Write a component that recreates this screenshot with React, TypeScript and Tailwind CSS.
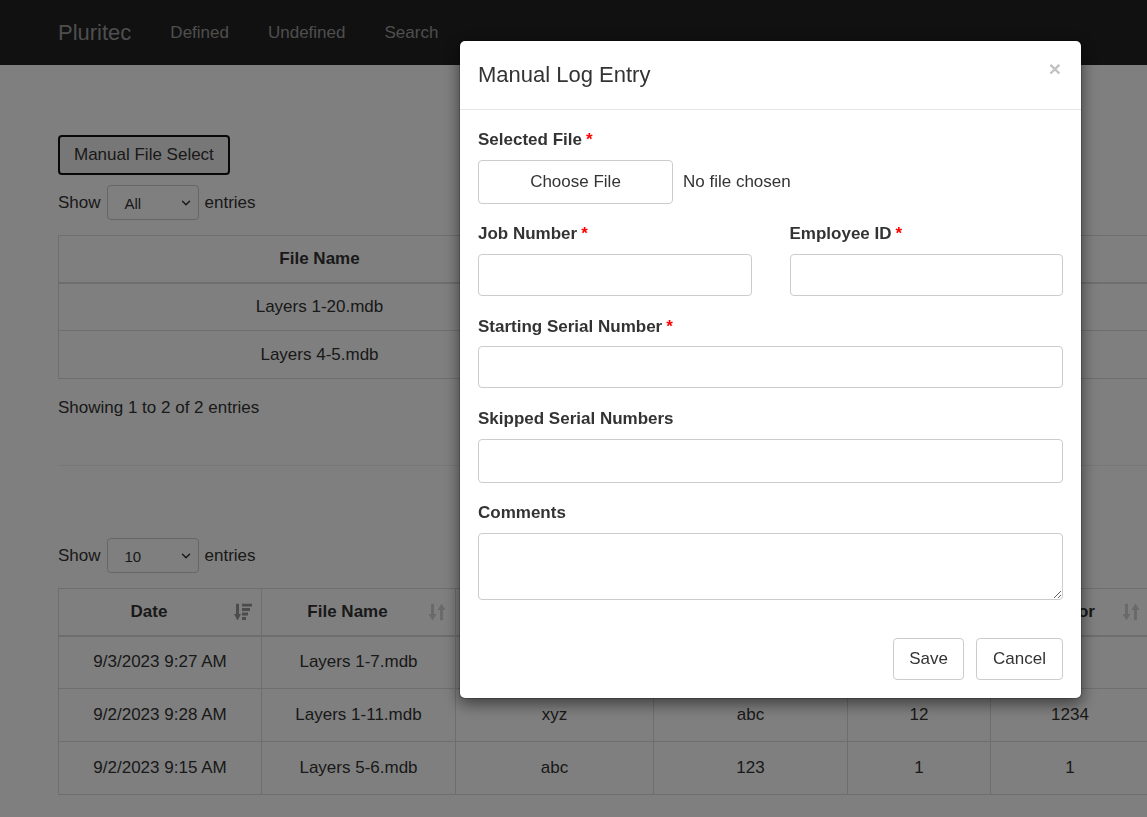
import { ChevronDown } from 'lucide-react';

// row 1 sits mostly behind the modal, so its middle cells stay blank
const bottomRows = [
  { date: '9/3/2023 9:27 AM', file: 'Layers 1-7.mdb', job: '', emp: '', count: '', op: '' },
  { date: '9/2/2023 9:28 AM', file: 'Layers 1-11.mdb', job: 'xyz', emp: 'abc', count: '12', op: '1234' },
  { date: '9/2/2023 9:15 AM', file: 'Layers 5-6.mdb', job: 'abc', emp: '123', count: '1', op: '1' },
];

function SortIcon({ active }: { active?: boolean }) {
  if (active) {
    return (
      <svg width="18" height="17" viewBox="0 0 18 17" className="fill-[#333] opacity-50">
        <rect x="2" y="0" width="3" height="11" />
        <polygon points="0,10.5 7,10.5 3.5,17" />
        <rect x="8" y="0" width="10" height="3" />
        <rect x="8" y="4.5" width="8" height="3" />
        <rect x="8" y="9" width="6" height="3" />
        <rect x="8" y="13.5" width="4" height="3" />
      </svg>
    );
  }
  return (
    <svg width="18" height="17" viewBox="0 0 18 17" className="fill-[#333] opacity-20">
      <rect x="3" y="0" width="3" height="11" />
      <polygon points="0.5,10.5 8.5,10.5 4.5,17" />
      <polygon points="9.5,6.5 17.5,6.5 13.5,0" />
      <rect x="12" y="6" width="3" height="11" />
    </svg>
  );
}

function ShowEntries({ value, className }: { value: string; className: string }) {
  return (
    <div className={`flex items-center gap-[6px] ${className}`}>
      <span>Show</span>
      <div className="flex h-[35px] w-[92px] items-center justify-between rounded-[4px] border border-[#ccc] bg-white pl-[17px] pr-[5px] text-[15px]">
        <span className="pt-[2px]">{value}</span>
        <ChevronDown size={14} strokeWidth={2.5} className="text-[#333]" />
      </div>
      <span>entries</span>
    </div>
  );
}

function SortTh({ label, active }: { label: string; active?: boolean }) {
  return (
    <th className="h-[47px] border border-b-2 border-[#ddd] p-0 font-bold">
      <div className="relative flex items-center justify-center pl-[8px] pr-[30px]">
        <span>{label}</span>
        <span className="absolute right-[9px] top-1/2 -translate-y-1/2">
          <SortIcon active={active} />
        </span>
      </div>
    </th>
  );
}

function Label({ text, required }: { text: string; required?: boolean }) {
  return (
    <label className="block text-[17px] font-bold leading-[24px] text-[#333]">
      {text}
      {required && <span className="ml-[4px] text-[#ff0000]">*</span>}
    </label>
  );
}

export default function App() {
  return (
    <div className="relative h-[817px] overflow-hidden bg-white font-['Liberation_Sans',Arial,sans-serif] text-[17px] leading-[24px] text-[#333]">
      <nav className="flex h-[65px] items-center gap-[39px] bg-[#222] pl-[58px] text-[#9d9d9d]">
        <span className="text-[22px]">Pluritec</span>
        <span>Defined</span>
        <span>Undefined</span>
        <span>Search</span>
      </nav>

      <main className="ml-[58px] w-[1092px]">
        <button className="mt-[70px] h-[40px] rounded-[4px] border-2 border-[#111] bg-[#efefef] px-[14px] text-[17px]">
          Manual File Select
        </button>
        <ShowEntries value="All" className="mt-[10px]" />

        <table className="mt-[15px] w-full table-fixed border-collapse">
          <colgroup>
            <col className="w-[522px]" />
            <col />
          </colgroup>
          <thead>
            <tr>
              <th className="h-[47px] border border-b-2 border-[#ddd] font-bold">File Name</th>
              <th className="h-[47px] border border-b-2 border-[#ddd] font-bold"></th>
            </tr>
          </thead>
          <tbody>
            {['Layers 1-20.mdb', 'Layers 4-5.mdb'].map((f) => (
              <tr key={f}>
                <td className="h-[48px] border border-[#ddd] text-center">{f}</td>
                <td className="h-[48px] border border-[#ddd] text-center"></td>
              </tr>
            ))}
          </tbody>
        </table>

        <p className="mt-[17px]">Showing 1 to 2 of 2 entries</p>
        <hr className="mt-[45px] border-t border-[#eee]" />

        <ShowEntries value="10" className="mt-[72px]" />

        <table className="mt-[15px] w-full table-fixed border-collapse">
          <colgroup>
            <col className="w-[203px]" />
            <col className="w-[194px]" />
            <col className="w-[198px]" />
            <col className="w-[194px]" />
            <col className="w-[143px]" />
            <col />
          </colgroup>
          <thead>
            <tr>
              <SortTh label="Date" active />
              <SortTh label="File Name" />
              <SortTh label="Job" />
              <SortTh label="Emp" />
              <SortTh label="Qty" />
              <SortTh label="Operator" />
            </tr>
          </thead>
          <tbody>
            {bottomRows.map((r) => (
              <tr key={r.date}>
                {[r.date, r.file, r.job, r.emp, r.count, r.op].map((v, i) => (
                  <td key={i} className="h-[53px] border border-[#ddd] text-center">
                    {v}
                  </td>
                ))}
              </tr>
            ))}
          </tbody>
        </table>
      </main>

      <div className="fixed inset-0 bg-black/50">
        <div className="absolute left-[459px] top-[40px] w-[623px] rounded-[6px] border border-black/20 bg-white bg-clip-padding shadow-[0_5px_15px_rgba(0,0,0,0.5)]">
          <div className="flex h-[69px] items-center justify-between border-b border-[#e5e5e5] pl-[18px] pr-[20px]">
            <h4 className="text-[22px] leading-none text-[#333]">Manual Log Entry</h4>
            <span className="mb-[14px] text-[21px] font-bold leading-none text-[#c2c2c2]">×</span>
          </div>

          <div className="px-[18px] pt-[18px]">
            <Label text="Selected File" required />
            <div className="mt-[8px] flex items-center">
              <div className="flex h-[44px] w-[195px] items-center justify-center rounded-[4px] border border-[#ccc] bg-white">
                Choose File
              </div>
              <span className="ml-[10px]">No file chosen</span>
            </div>

            <div className="mt-[18px] grid grid-cols-2 gap-x-[38px]">
              <div>
                <Label text="Job Number" required />
                <div className="mt-[8px] h-[42px] rounded-[4px] border border-[#ccc]" />
              </div>
              <div>
                <Label text="Employee ID" required />
                <div className="mt-[8px] h-[42px] rounded-[4px] border border-[#ccc]" />
              </div>
            </div>

            <div className="mt-[19px]">
              <Label text="Starting Serial Number" required />
              <div className="mt-[7px] h-[42px] rounded-[4px] border border-[#ccc]" />
            </div>

            <div className="mt-[19px]">
              <Label text="Skipped Serial Numbers" />
              <div className="mt-[8px] h-[44px] rounded-[4px] border border-[#ccc]" />
            </div>

            <div className="mt-[18px]">
              <Label text="Comments" />
              <textarea className="mt-[8px] block h-[67px] w-full rounded-[4px] border border-[#ccc] outline-none" />
            </div>
          </div>

          <div className="flex justify-end gap-[12px] px-[18px] pb-[18px] pt-[38px]">
            <button className="h-[42px] w-[71px] rounded-[4px] border border-[#ccc] bg-white text-[17px]">Save</button>
            <button className="h-[42px] w-[87px] rounded-[4px] border border-[#ccc] bg-white text-[17px]">Cancel</button>
          </div>
        </div>
      </div>
    </div>
  );
}
